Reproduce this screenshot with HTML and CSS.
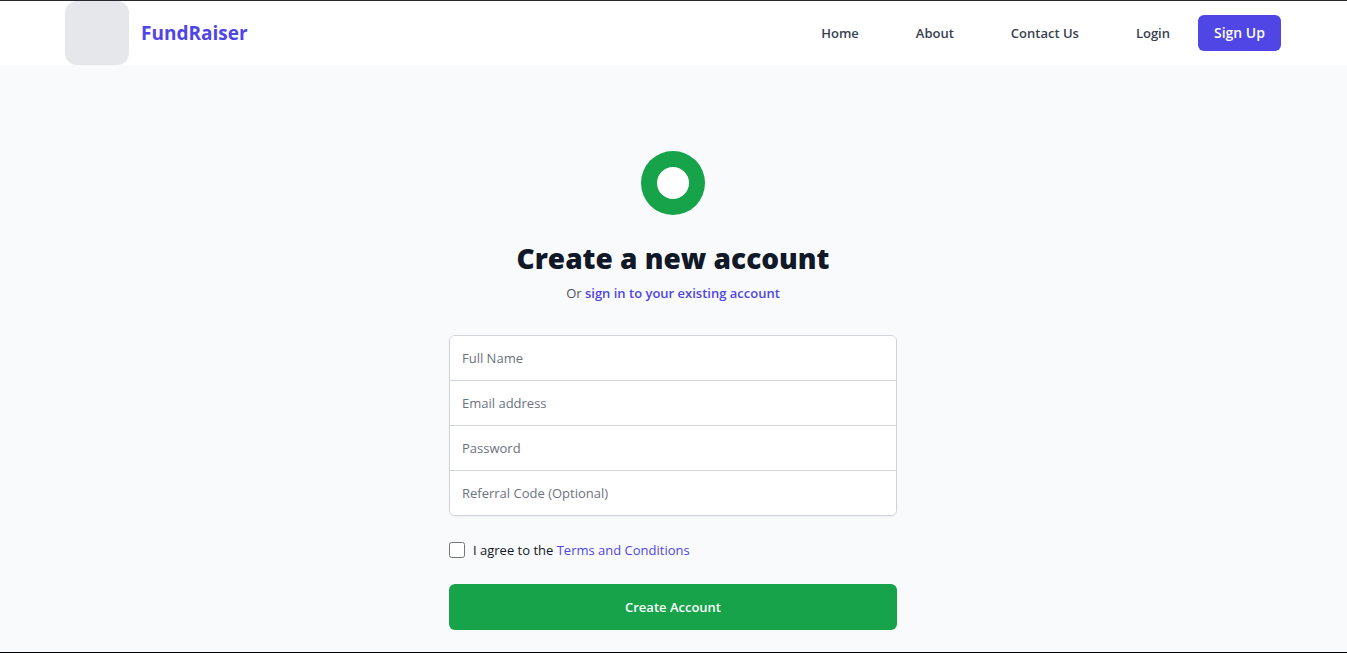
FILE: index.html
```
<!DOCTYPE html>
<html lang="en">
<head>
<meta charset="utf-8">
<meta name="viewport" content="width=device-width, initial-scale=1">
<title>FundRaiser - Create a new account</title>
<link rel="stylesheet" href="styles.css">
</head>
<body>
<header class="header">
  <div class="header-inner">
    <a class="brand" href="#"><span class="brand-mark"></span><span class="brand-name">FundRaiser</span></a>
    <nav class="nav">
      <a class="nav-link" href="#">Home</a>
      <a class="nav-link" href="#">About</a>
      <a class="nav-link" href="#">Contact Us</a>
      <a class="nav-link" href="#">Login</a>
    </nav>
    <a class="signup" href="#">Sign Up</a>
  </div>
</header>
<main class="main">
  <div class="panel">
    <svg class="emblem" viewBox="0 0 64 64" aria-hidden="true"><circle cx="32" cy="32" r="32" fill="#16a34a"/><circle cx="32" cy="32" r="16" fill="#fff"/></svg>
    <h1 class="title">Create a new account</h1>
    <p class="subtitle">Or <a class="link link-strong" href="#">sign in to your existing account</a></p>
    <form class="form">
      <div class="fields">
        <input class="field" type="text" name="name" placeholder="Full Name" aria-label="Full Name">
        <input class="field" type="email" name="email" placeholder="Email address" aria-label="Email address">
        <input class="field" type="password" name="password" placeholder="Password" aria-label="Password">
        <input class="field" type="text" name="referral" placeholder="Referral Code (Optional)" aria-label="Referral Code (Optional)">
      </div>
      <div class="terms">
        <input class="checkbox" type="checkbox" id="terms">
        <label for="terms">I agree to the <a class="link" href="#">Terms and Conditions</a></label>
      </div>
      <button class="submit" type="submit">Create Account</button>
    </form>
  </div>
</main>
</body>
</html>
```
FILE: styles.css
```
* {
  box-sizing: border-box;
}

body {
  margin: 0;
  min-height: 100vh;
  display: flex;
  flex-direction: column;
  border-top: 1px solid #27272f;
  border-bottom: 1px solid #000;
  background: #f9fafc;
  color: #111827;
  font-family: "Segoe UI", "Open Sans", "Noto Sans", sans-serif;
  font-size: 13px;
  line-height: 20px;
}

a {
  text-decoration: none;
}

.header {
  padding-right: 1px;
  background: #fff;
}

.header-inner {
  max-width: 1280px;
  height: 64px;
  margin: 0 auto;
  padding: 0 32px;
  display: flex;
  align-items: center;
}

.brand {
  display: flex;
  align-items: center;
  gap: 12px;
  margin-right: auto;
}

.brand-mark {
  width: 64px;
  height: 64px;
  border-radius: 12px;
  background: #e5e7eb;
}

.brand-name {
  color: #4f46e5;
  font-size: 19px;
  font-weight: 700;
  line-height: 28px;
}

.nav {
  display: flex;
  gap: 33px;
  margin-right: 16px;
}

.nav-link {
  padding: 8px 12px;
  color: #374151;
  font-weight: 600;
}

.signup {
  padding: 8px 16px;
  border-radius: 6px;
  background: #4f46e5;
  color: #fff;
  font-size: 14px;
  font-weight: 600;
}

.main {
  flex: 1;
  display: flex;
  justify-content: center;
  align-items: flex-start;
  padding: 86px 33px 22px 32px;
}

.panel {
  width: 100%;
  max-width: 448px;
}

.emblem {
  display: block;
  width: 64px;
  height: 64px;
  margin: 0 auto;
}

.title {
  margin: 25px 0 7px;
  font-size: 28px;
  font-weight: 800;
  line-height: 36px;
  text-align: center;
}

.subtitle {
  margin: 0 0 32px;
  color: #4b5563;
  text-align: center;
}

.link {
  color: #4f46e5;
}

.link-strong {
  font-weight: 600;
}

.form {
  display: grid;
  gap: 24px;
}

.fields {
  display: grid;
  overflow: hidden;
  border: 1px solid #d1d5db;
  border-radius: 6px;
  background: #fff;
  box-shadow: 0 1px 2px rgba(0, 0, 0, 0.05);
}

.field {
  width: 100%;
  height: 44px;
  padding: 12px;
  border: 0;
  background: #fff;
  color: #111827;
  font: inherit;
}

.field + .field {
  height: 45px;
  border-top: 1px solid #d1d5db;
}

.field::placeholder {
  color: #6b7280;
}

.terms {
  display: flex;
  align-items: center;
  gap: 8px;
}

.checkbox {
  width: 16px;
  height: 16px;
  margin: 0;
}

.submit {
  padding: 13px 16px;
  border: 0;
  border-radius: 6px;
  background: #16a34a;
  color: #fff;
  font: inherit;
  font-weight: 600;
}
```
